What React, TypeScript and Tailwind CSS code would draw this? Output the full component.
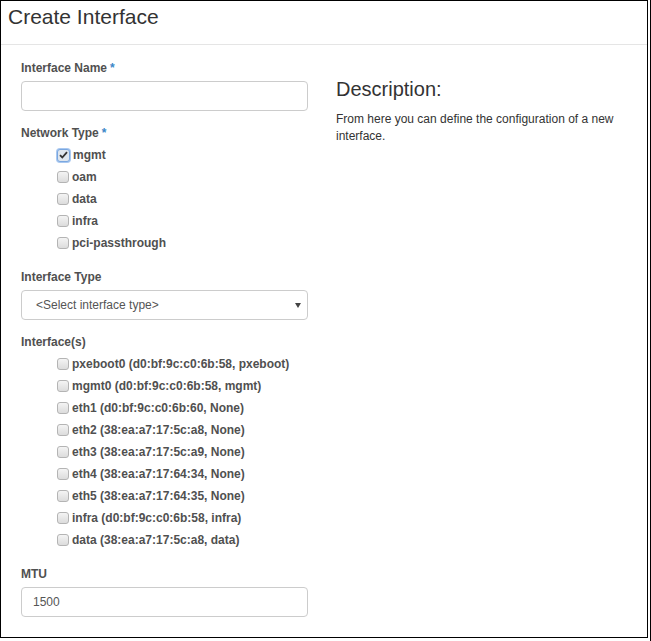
import React from "react";

const networkTypes = [
  { name: "mgmt", checked: true },
  { name: "oam", checked: false },
  { name: "data", checked: false },
  { name: "infra", checked: false },
  { name: "pci-passthrough", checked: false },
];

const interfaces = [
  "pxeboot0 (d0:bf:9c:c0:6b:58, pxeboot)",
  "mgmt0 (d0:bf:9c:c0:6b:58, mgmt)",
  "eth1 (d0:bf:9c:c0:6b:60, None)",
  "eth2 (38:ea:a7:17:5c:a8, None)",
  "eth3 (38:ea:a7:17:5c:a9, None)",
  "eth4 (38:ea:a7:17:64:34, None)",
  "eth5 (38:ea:a7:17:64:35, None)",
  "infra (d0:bf:9c:c0:6b:58, infra)",
  "data (38:ea:a7:17:5c:a8, data)",
];

function Box({ checked }: { checked?: boolean }) {
  if (checked) {
    return (
      <span className="relative flex h-[13px] w-[13px] shrink-0 items-center justify-center rounded-[3px] border border-[#7aa7e0] bg-[#dfe6ee] shadow-[0_0_0_1px_#a9c8f0]">
        <svg width="9" height="8" viewBox="0 0 9 8">
          <path d="M1 4.2 L3.3 6.5 L8 1.2" stroke="#333" strokeWidth="1.8" fill="none" />
        </svg>
      </span>
    );
  }
  return (
    <span className="h-[12px] w-[12px] shrink-0 rounded-[3px] border border-[#b4b4b4] bg-gradient-to-b from-[#f4f4f4] to-[#dcdcdc]" />
  );
}

function CheckRow({ label, checked }: { label: string; checked?: boolean }) {
  return (
    <div className="flex h-[22px] items-center gap-[3px] pl-[36px] text-[12px] font-bold text-[#505050]">
      <Box checked={checked} />
      <span>{label}</span>
    </div>
  );
}

function Label({ text, required }: { text: string; required?: boolean }) {
  return (
    <div className="h-[17px] text-[12px] font-bold leading-[17px] text-[#505050]">
      {text}
      {required && <span className="ml-[3px] text-[#3a87c8]">*</span>}
    </div>
  );
}

export default function App() {
  return (
    <div className="h-[641px] w-[651px] border-r border-black bg-white font-['Liberation_Sans',Arial,sans-serif]">
      <div className="h-[638px] w-[648px] border border-black">
        <div className="h-[44px] border-b border-[#e5e5e5] pl-[7px] pt-[3px] text-[21px] leading-[26px] text-[#333]">
          Create Interface
        </div>
        <div className="flex pl-[20px] pt-[15px]">
          <div className="w-[287px]">
            <Label text="Interface Name" required />
            <div className="mt-[4px] h-[30px] rounded-[4px] border border-[#cccccc]" />

            <div className="mt-[14px]">
              <Label text="Network Type" required />
            </div>
            <div className="mt-[2px]">
              {networkTypes.map((t) => (
                <CheckRow key={t.name} label={t.name} checked={t.checked} />
              ))}
            </div>

            <div className="mt-[15px]">
              <Label text="Interface Type" />
            </div>
            <div className="mt-[4px] flex h-[30px] items-center justify-between rounded-[4px] border border-[#cccccc] pl-[14px] pr-[5px] text-[12px] text-[#555]">
              <span>&lt;Select interface type&gt;</span>
              <svg width="6" height="5" viewBox="0 0 6 5" className="mr-[1px]">
                <path d="M0 0 H6 L3 5 Z" fill="#444" />
              </svg>
            </div>

            <div className="mt-[14px]">
              <Label text="Interface(s)" />
            </div>
            <div className="mt-[2px]">
              {interfaces.map((i) => (
                <CheckRow key={i} label={i} />
              ))}
            </div>

            <div className="mt-[15px]">
              <Label text="MTU" />
            </div>
            <div className="mt-[4px] flex h-[30px] items-center rounded-[4px] border border-[#cccccc] pl-[11px] text-[12px] text-[#555]">
              1500
            </div>
          </div>

          <div className="ml-[28px] w-[290px] pt-[17px] text-[#333]">
            <div className="text-[20px] leading-[24px]">Description:</div>
            <p className="mt-[10px] text-[12px] leading-[17px]">
              From here you can define the configuration of a new interface.
            </p>
          </div>
        </div>
      </div>
    </div>
  );
}
